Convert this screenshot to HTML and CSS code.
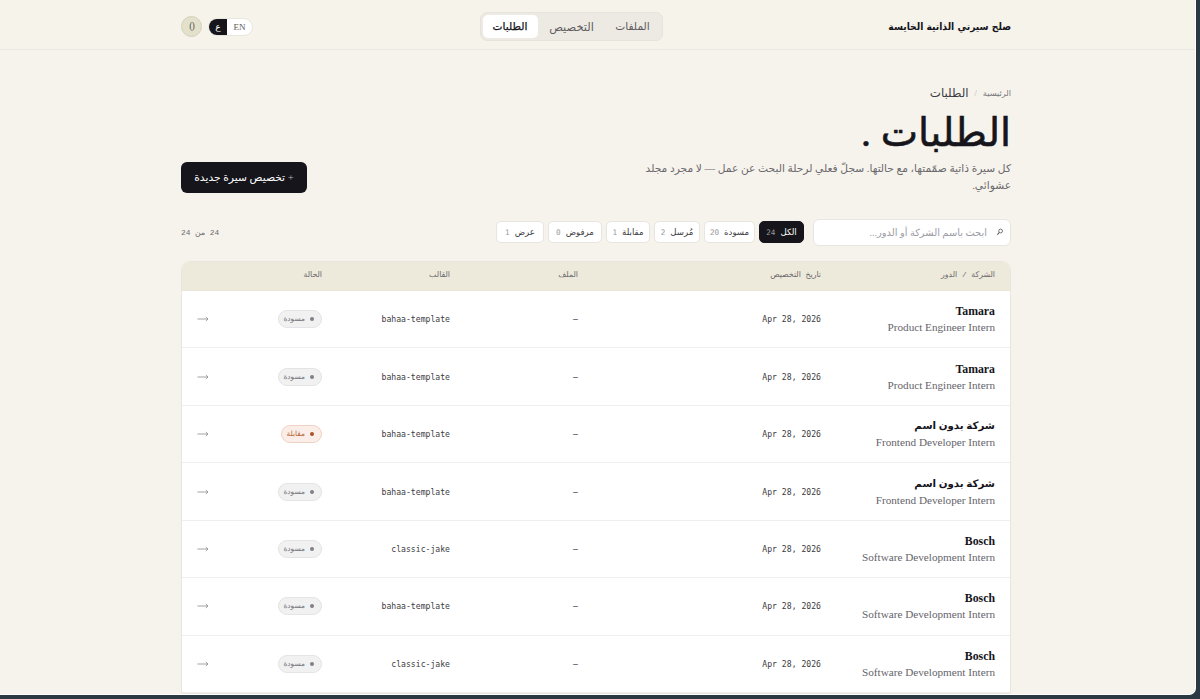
FILE: index.html
```html
<!DOCTYPE html>
<html lang="ar" dir="rtl">
<head>
    <meta charset="UTF-8">
    <meta name="viewport" content="width=device-width, initial-scale=1.0">
    <title>الطلبات</title>
    <link rel="stylesheet" href="styles.css">
</head>
<body>
    <div class="page">
        <header class="topbar">
            <div class="container topbar-inner">
                <div class="brand">صلح سيرتي الذاتية الخايسة</div>
                <nav class="tabs">
                    <a class="tab">الملفات</a>
                    <a class="tab wide">التخصيص</a>
                    <a class="tab active">الطلبات</a>
                </nav>
                <div class="account">
                    <div class="lang">
                        <span class="lang-item">EN</span>
                        <span class="lang-item active">ع</span>
                    </div>
                    <div class="avatar">()</div>
                </div>
            </div>
        </header>

        <main class="container">
            <div class="breadcrumb">
                <span>الرئيسية</span>
                <span class="sep">/</span>
                <span class="current">الطلبات</span>
            </div>

            <div class="hero">
                <div class="hero-text">
                    <h1>الطلبات .</h1>
                    <p>كل سيرة ذاتية صمّمتها، مع حالتها. سجلّ فعلي لرحلة البحث عن عمل — لا مجرد مجلد<br>عشوائي.</p>
                </div>
                <button class="new-btn"><span class="plus">+</span> تخصيص سيرة جديدة</button>
            </div>

            <div class="toolbar">
                <div class="search">
                    <svg class="search-icon" viewBox="0 0 8 8" fill="none" stroke="currentColor">
                        <circle cx="4.6" cy="3" r="1.9" stroke-width="0.8"/>
                        <path d="M3.2 4.5L1.4 6.6" stroke-width="1.1"/>
                    </svg>
                    <span>ابحث باسم الشركة أو الدور...</span>
                </div>
                <div class="filters">
                    <div class="filter all active">الكل <b>24</b></div>
                    <div class="filter draft">مسودة <b>20</b></div>
                    <div class="filter sent">مُرسل <b>2</b></div>
                    <div class="filter interview">مقابلة <b>1</b></div>
                    <div class="filter rejected">مرفوض <b>0</b></div>
                    <div class="filter offer">عرض <b>1</b></div>
                </div>
                <div class="count">24 من 24</div>
            </div>

            <div class="table">
                <div class="row head">
                    <div>الشركة / الدور</div>
                    <div>تاريخ التخصيص</div>
                    <div>الملف</div>
                    <div>القالب</div>
                    <div>الحالة</div>
                    <div></div>
                </div>
                <div class="row">
                    <div class="job"><div class="company">Tamara</div><div class="role">Product Engineer Intern</div></div>
                    <div class="mono" dir="ltr">Apr 28, 2026</div>
                    <div class="mono">—</div>
                    <div class="mono" dir="ltr">bahaa-template</div>
                    <div class="status">مسودة</div>
                    <div class="arrow"><svg viewBox="0 0 12 6"><path d="M0.5 3H11M8.8 1L11 3L8.8 5"/></svg></div>
                </div>
                <div class="row">
                    <div class="job"><div class="company">Tamara</div><div class="role">Product Engineer Intern</div></div>
                    <div class="mono" dir="ltr">Apr 28, 2026</div>
                    <div class="mono">—</div>
                    <div class="mono" dir="ltr">bahaa-template</div>
                    <div class="status">مسودة</div>
                    <div class="arrow"><svg viewBox="0 0 12 6"><path d="M0.5 3H11M8.8 1L11 3L8.8 5"/></svg></div>
                </div>
                <div class="row">
                    <div class="job"><div class="company ar">شركة بدون اسم</div><div class="role">Frontend Developer Intern</div></div>
                    <div class="mono" dir="ltr">Apr 28, 2026</div>
                    <div class="mono">—</div>
                    <div class="mono" dir="ltr">bahaa-template</div>
                    <div class="status interview">مقابلة</div>
                    <div class="arrow"><svg viewBox="0 0 12 6"><path d="M0.5 3H11M8.8 1L11 3L8.8 5"/></svg></div>
                </div>
                <div class="row">
                    <div class="job"><div class="company ar">شركة بدون اسم</div><div class="role">Frontend Developer Intern</div></div>
                    <div class="mono" dir="ltr">Apr 28, 2026</div>
                    <div class="mono">—</div>
                    <div class="mono" dir="ltr">bahaa-template</div>
                    <div class="status">مسودة</div>
                    <div class="arrow"><svg viewBox="0 0 12 6"><path d="M0.5 3H11M8.8 1L11 3L8.8 5"/></svg></div>
                </div>
                <div class="row">
                    <div class="job"><div class="company">Bosch</div><div class="role">Software Development Intern</div></div>
                    <div class="mono" dir="ltr">Apr 28, 2026</div>
                    <div class="mono">—</div>
                    <div class="mono" dir="ltr">classic-jake</div>
                    <div class="status">مسودة</div>
                    <div class="arrow"><svg viewBox="0 0 12 6"><path d="M0.5 3H11M8.8 1L11 3L8.8 5"/></svg></div>
                </div>
                <div class="row">
                    <div class="job"><div class="company">Bosch</div><div class="role">Software Development Intern</div></div>
                    <div class="mono" dir="ltr">Apr 28, 2026</div>
                    <div class="mono">—</div>
                    <div class="mono" dir="ltr">bahaa-template</div>
                    <div class="status">مسودة</div>
                    <div class="arrow"><svg viewBox="0 0 12 6"><path d="M0.5 3H11M8.8 1L11 3L8.8 5"/></svg></div>
                </div>
                <div class="row">
                    <div class="job"><div class="company">Bosch</div><div class="role">Software Development Intern</div></div>
                    <div class="mono" dir="ltr">Apr 28, 2026</div>
                    <div class="mono">—</div>
                    <div class="mono" dir="ltr">classic-jake</div>
                    <div class="status">مسودة</div>
                    <div class="arrow"><svg viewBox="0 0 12 6"><path d="M0.5 3H11M8.8 1L11 3L8.8 5"/></svg></div>
                </div>
            </div>
        </main>
    </div>
</body>
</html>
```
FILE: styles.css
```css
* {
    box-sizing: border-box;
}

body {
    margin: 0;
    height: 699px;
    overflow: hidden;
    background: #2b3a42;
    font-family: "Liberation Serif", "DejaVu Sans", serif;
    color: #15151b;
}

.page {
    width: 1196px;
    height: 695px;
    margin-right: 4px;
    overflow: hidden;
    background: #f6f3ec;
    border-right: 1px solid #fff;
    border-bottom: 1px solid #fff;
    border-bottom-right-radius: 7px;
}

.container {
    width: 830px;
    margin-right: 184px;
}

.topbar {
    height: 50px;
    background: #f6f3eb;
    border-bottom: 1px solid #eae7e1;
}

.topbar-inner {
    display: flex;
    justify-content: space-between;
    align-items: center;
    height: 53px;
}

.brand {
    width: 122px;
    font-family: "DejaVu Sans Condensed", "DejaVu Sans", sans-serif;
    font-size: 10.2px;
    font-weight: bold;
    font-stretch: condensed;
    white-space: nowrap;
}

.tabs {
    display: flex;
    align-items: center;
    width: 183px;
    height: 29px;
    padding: 2px;
    background: #edeae3;
    border: 1px solid #e6e3dd;
    border-radius: 7px;
}

.tab {
    flex: 0 0 54px;
    height: 23px;
    line-height: 24px;
    border-radius: 5px;
    font-size: 10.6px;
    text-align: center;
    color: #5d5c60;
}

.tab.wide {
    flex: 1;
    font-size: 11.4px;
}

.tab.active {
    flex: 0 0 55px;
    background: #fff;
    color: #15151b;
    -webkit-text-stroke: 0.25px #15151b;
}

.account {
    display: flex;
    align-items: center;
    gap: 6px;
}

.lang {
    display: flex;
    width: 45px;
    height: 18px;
    border: 1px solid #e9e6e0;
    border-radius: 9px;
    overflow: hidden;
    background: #fff;
    font-size: 9px;
    line-height: 17px;
    text-align: center;
    color: #5d5c60;
}

.lang-item {
    flex: 1;
}

.lang-item.active {
    flex: 0 0 18px;
    background: #15151b;
    color: #fff;
}

.avatar {
    width: 21px;
    height: 21px;
    border: 1px solid #d3d0ba;
    border-radius: 50%;
    background: #e3e1cb;
    font-size: 10px;
    letter-spacing: -1px;
    line-height: 18px;
    text-align: center;
    color: #5d5c60;
}

.breadcrumb {
    display: flex;
    align-items: center;
    gap: 6px;
    height: 16px;
    margin-top: 35px;
    font-size: 8.2px;
    color: #77757a;
}

.breadcrumb .sep {
    color: #b0aeab;
}

.breadcrumb .current {
    font-size: 11.8px;
    color: #3c3b41;
}

.hero {
    display: flex;
    justify-content: space-between;
    align-items: flex-end;
    height: 92px;
}

.hero-text {
    width: 400px;
}

.hero h1 {
    margin: 0;
    height: 57px;
    font-size: 39.7px;
    line-height: 60px;
    font-weight: normal;
    white-space: nowrap;
    -webkit-text-stroke: 0.6px #15151b;
}

.hero p {
    margin: 0;
    height: 33px;
    font-size: 10.65px;
    line-height: 17px;
    white-space: nowrap;
    color: #6b696d;
}

.new-btn {
    width: 126px;
    height: 31px;
    padding: 0;
    border: 0;
    border-radius: 6px;
    background: #15151b;
    color: #fff;
    font-family: inherit;
    font-size: 10.7px;
    white-space: nowrap;
}

.new-btn .plus {
    color: #b5b5ba;
}

.toolbar {
    display: flex;
    align-items: center;
    height: 28px;
    margin-top: 25px;
}

.search {
    display: flex;
    align-items: center;
    gap: 9px;
    width: 198px;
    height: 27px;
    padding: 0 6px;
    background: #fff;
    border: 1px solid #e9e6e0;
    border-radius: 6px;
    font-size: 9.9px;
    white-space: nowrap;
    color: #9c9ca6;
}

.search-icon {
    width: 8px;
    height: 8px;
    color: #55545a;
}

.filters {
    display: flex;
    gap: 4px;
    margin-right: 9px;
}

.filter {
    display: flex;
    justify-content: center;
    align-items: center;
    gap: 5px;
    height: 22px;
    background: #fff;
    border: 1px solid #e9e6e0;
    border-radius: 5px;
    font-size: 8.6px;
    white-space: nowrap;
    color: #3c3b41;
}

.filter b {
    font-family: "DejaVu Sans Mono", monospace;
    font-size: 7.6px;
    font-weight: normal;
    color: #9a999c;
}

.filter.active {
    background: #15151b;
    border-color: #15151b;
    color: #fff;
}

.filter.all { width: 45px; }
.filter.draft { width: 51px; }
.filter.sent { width: 46px; }
.filter.interview { width: 44px; }
.filter.rejected { width: 54px; }
.filter.offer { width: 48px; }

.count {
    margin-right: auto;
    font-family: "Liberation Mono", "DejaVu Sans", monospace;
    font-size: 7.8px;
    color: #6b696d;
}

.table {
    margin-top: 15px;
    border: 1px solid #e9e6e0;
    border-radius: 9px 9px 0 0;
    overflow: hidden;
    background: #fff;
}

.row {
    display: grid;
    grid-template-columns: 174px 243px 128px 128px 110px 1fr;
    align-items: center;
    height: 57.45px;
    padding: 0 15px;
    border-bottom: 1px solid #efeff0;
    white-space: nowrap;
}

.row.head {
    height: 29px;
    padding-bottom: 3px;
    background: #edeadb;
    border-bottom: 1px solid #e9e6da;
    font-family: "Liberation Mono", "DejaVu Sans", monospace;
    font-size: 7.8px;
    color: #6b696d;
}

.job {
    padding-top: 1px;
}

.company {
    font-size: 11.8px;
    font-weight: bold;
    line-height: 16px;
}

.company.ar {
    font-size: 10.3px;
}

.role {
    font-size: 11.2px;
    line-height: 17px;
    color: #65646a;
}

.mono {
    font-family: "DejaVu Sans Mono", monospace;
    font-size: 8.15px;
    text-align: right;
    color: #3c3b41;
}

.status {
    display: flex;
    align-items: center;
    gap: 5px;
    width: 44px;
    height: 18px;
    padding-right: 7px;
    border: 1px solid #e4e4e6;
    border-radius: 9px;
    background: #f1f1f2;
    font-family: "DejaVu Sans", sans-serif;
    font-size: 7.4px;
    line-height: 14px;
    color: #77767b;
}

.status::before {
    content: '';
    width: 4px;
    height: 4px;
    border-radius: 50%;
    background: #808085;
}

.status.interview {
    width: 41px;
    border-color: #f0d2c4;
    background: #fbeee8;
    color: #b5663a;
}

.status.interview::before {
    background: #a8532a;
}

.arrow {
    display: flex;
    justify-content: flex-end;
}

.arrow svg {
    width: 12px;
    height: 6px;
    fill: none;
    stroke: #8a8a8e;
    stroke-width: 0.8;
}
```
